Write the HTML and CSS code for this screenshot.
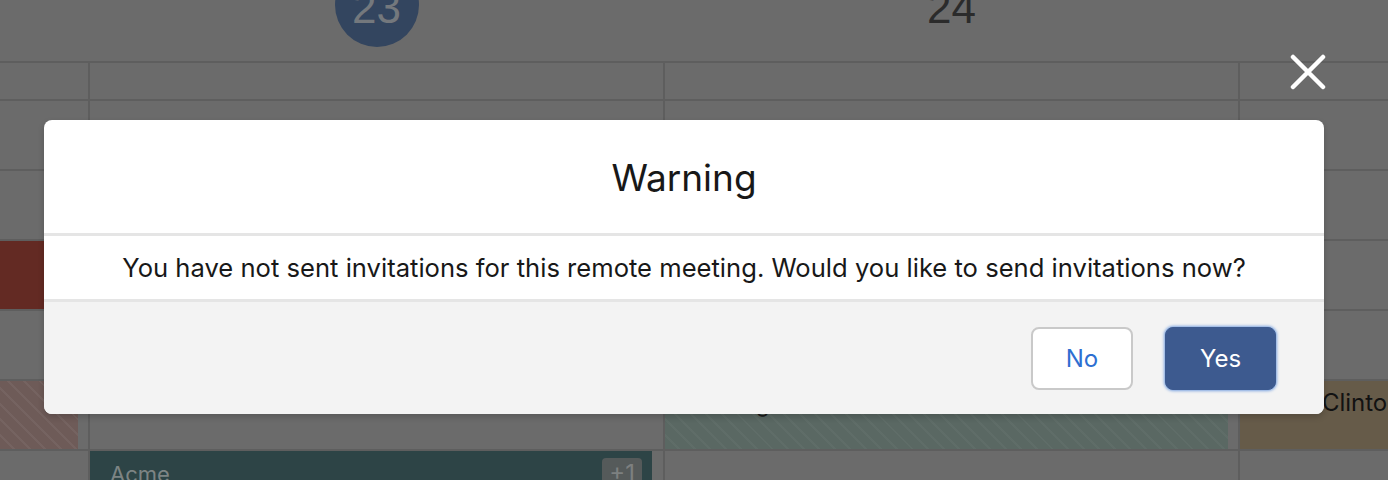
FILE: index.html
```html
<!DOCTYPE html>
<html lang="en">
<head>
<meta charset="utf-8">
<title>Warning</title>
<link rel="stylesheet" href="styles.css">
</head>
<body>
<div class="page">
  <div class="calendar">
    <div class="head">
      <div class="hcell"></div>
      <div class="hcell"><span class="day today">23</span></div>
      <div class="hcell"><span class="day">24</span></div>
      <div class="hcell"></div>
    </div>
    <div class="grid">
      <div class="cell"></div><div class="cell"></div><div class="cell"></div><div class="cell"></div>
      <div class="cell"></div><div class="cell"></div><div class="cell"></div><div class="cell"></div>
      <div class="cell"></div><div class="cell"></div><div class="cell"></div><div class="cell"></div>
      <div class="cell"><div class="event ev-red"></div></div><div class="cell"></div><div class="cell"></div><div class="cell"></div>
      <div class="cell"></div><div class="cell"></div><div class="cell"></div><div class="cell"></div>
      <div class="cell"><div class="event ev-redhatch"></div></div>
      <div class="cell"></div>
      <div class="cell"><div class="event ev-tealhatch"><span class="ev-title">Meeting</span></div></div>
      <div class="cell"><div class="event ev-tan"><span class="ev-title dark">Bill Clinton</span></div></div>
      <div class="cell"></div>
      <div class="cell"><div class="event ev-teal"><span class="ev-title">Acme</span><span class="more">+1</span></div></div>
      <div class="cell"></div><div class="cell"></div>
    </div>
  </div>

  <button class="close" aria-label="Close">
    <svg width="36" height="36" viewBox="0 0 36 36"><path d="M3 3 L33 33 M33 3 L3 33" stroke="#fff" stroke-width="4.5" stroke-linecap="round" fill="none"/></svg>
  </button>

  <div class="modal">
    <div class="modal-head"><h2>Warning</h2></div>
    <div class="modal-body">You have not sent invitations for this remote meeting. Would you like to send invitations now?</div>
    <div class="modal-foot">
      <button class="btn btn-neutral">No</button>
      <button class="btn btn-brand">Yes</button>
    </div>
  </div>
</div>
</body>
</html>
```
FILE: styles.css
```css
* { box-sizing: border-box; }
html, body { margin: 0; padding: 0; }
body {
  width: 1388px;
  height: 480px;
  overflow: hidden;
  background: #6b6b6b;
  font-family: Inter, "Noto Sans", "Liberation Sans", sans-serif;
}
.page {
  position: relative;
  width: 1388px;
  height: 480px;
  overflow: hidden;
}
.calendar {
  display: flex;
  flex-direction: column;
}
.head {
  display: grid;
  grid-template-columns: 88px 573px 573px 1fr;
  grid-template-rows: 61px;
  column-gap: 2px;
  height: 61px;
}
.hcell {
  display: flex;
  justify-content: center;
  align-items: flex-start;
  min-height: 0;
}
.day {
  display: flex;
  align-items: center;
  justify-content: center;
  width: 84px;
  height: 84px;
  flex: none;
  margin-top: -37px;
  border-radius: 50%;
  font-size: 44px;
  line-height: 1;
  color: #2b2b2b;
  font-family: "Liberation Sans", Arial, sans-serif;
  padding-top: 5px;
}
.day.today {
  background: #33455f;
  color: #74787d;
}
.grid {
  display: grid;
  grid-template-columns: 88px 573px 573px 1fr;
  grid-template-rows: 36px repeat(6, 68px);
  gap: 2px;
  border-top: 2px solid #5e5e5e;
  background: #5e5e5e;
}
.cell {
  background: #6b6b6b;
  display: flex;
  padding-right: 10px;
  min-width: 0;
}
.cell:nth-child(4n) { padding-right: 0; overflow: hidden; }
.event {
  flex: 1;
  min-width: 0;
  display: flex;
  align-items: flex-start;
  justify-content: space-between;
  font-size: 22px;
  line-height: 1;
}
.ev-red { background: #632a23; }
.ev-redhatch {
  background: #6e5b58 repeating-linear-gradient(45deg, transparent 0 9px, rgba(255,255,255,0.05) 9px 11px);
}
.ev-tealhatch {
  background: #5a6863 repeating-linear-gradient(45deg, transparent 0 9px, rgba(255,255,255,0.03) 9px 11px);
  padding: 12px 20px;
}
.ev-tan {
  background: #665b49;
  padding: 10px 0 0 42px;
}
.ev-teal {
  background: #2d4446;
  padding: 12px 10px 0 20px;
  margin-right: 1px;
}
.ev-title { color: #7d8484; font-size: 22px; }
.ev-tealhatch .ev-title { color: #1c1c1c; }
.ev-title.dark { color: #121212; white-space: nowrap; font-size: 24px; }
.more {
  background: #555a5a;
  color: #7d8080;
  border-radius: 4px;
  padding: 4px 7px;
  font-size: 24px;
  margin-top: -5px;
}
.close {
  position: absolute;
  left: 1290px;
  top: 54px;
  width: 36px;
  height: 36px;
  padding: 0;
  border: 0;
  background: none;
  display: block;
}
.close svg { display: block; }
.modal {
  position: absolute;
  left: 44px;
  top: 120px;
  width: 1280px;
  height: 294px;
  background: #fff;
  border-radius: 8px;
  overflow: hidden;
  display: flex;
  flex-direction: column;
  box-shadow: 0 3px 6px rgba(0,0,0,0.18);
}
.modal-head {
  height: 113px;
  display: flex;
  align-items: center;
  justify-content: center;
}
.modal-head h2 {
  margin: 0;
  font-size: 37px;
  font-weight: 400;
  color: #181818;
  padding-top: 2px;
}
.modal-body {
  height: 69px;
  border-top: 3px solid #e5e5e5;
  border-bottom: 3px solid #e5e5e5;
  display: flex;
  align-items: center;
  justify-content: center;
  font-size: 25.6px;
  color: #181818;
}
.modal-foot {
  flex: 1;
  background: #f3f3f3;
  display: flex;
  justify-content: flex-end;
  align-items: flex-start;
  padding: 25px 48px 0 0;
  gap: 32px;
}
.btn {
  height: 63px;
  border-radius: 8px;
  font-family: inherit;
  font-size: 24px;
  padding: 0;
}
.btn-neutral {
  width: 102px;
  background: #fff;
  border: 2px solid #c9c9c9;
  color: #2e6fd1;
}
.btn-brand {
  width: 111px;
  background: #3d5a8f;
  border: 1px solid #3d5a8f;
  color: #fff;
  box-shadow: 0 0 3px 1px #7aa3e0;
}
```
